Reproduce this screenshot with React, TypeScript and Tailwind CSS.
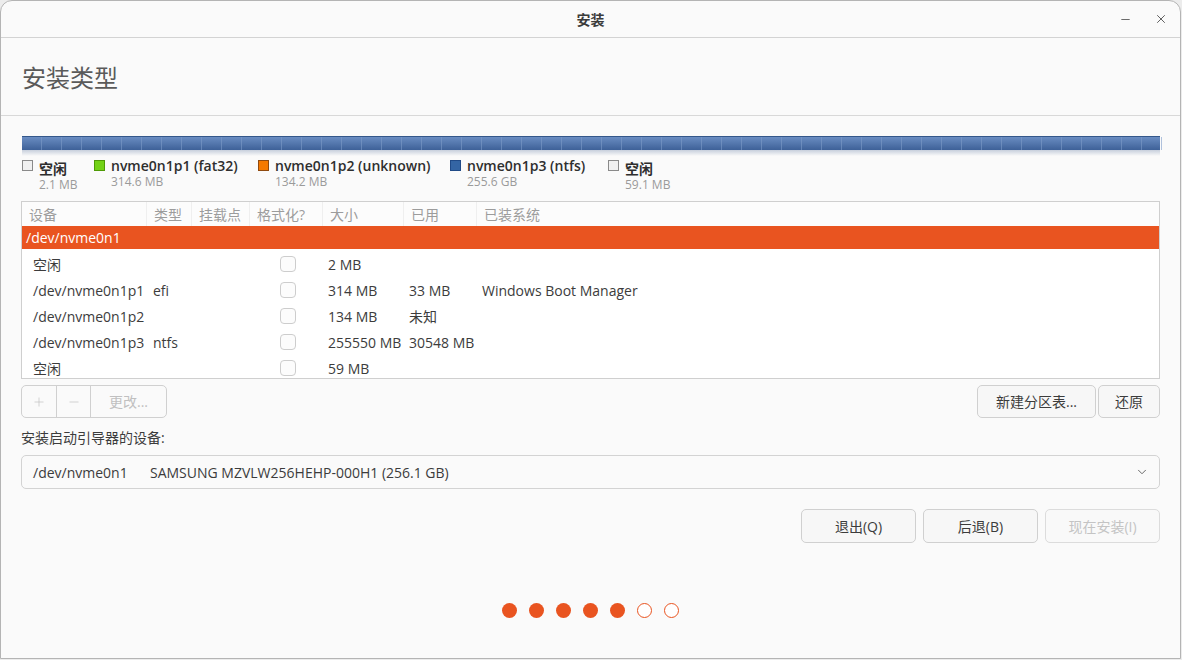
import { ChevronDown, Minus, Plus, X } from "lucide-react";

const font = "font-['Open_Sans','Noto_Sans_CJK_SC',sans-serif]";

const legend = [
  { name: "空闲", size: "2.1 MB", color: "bg-[#f0f0f0] border-[#8a8a8a]" },
  { name: "nvme0n1p1 (fat32)", size: "314.6 MB", color: "bg-[#73d216] border-[#4e9a06]" },
  { name: "nvme0n1p2 (unknown)", size: "134.2 MB", color: "bg-[#f57900] border-[#8f4a10]" },
  { name: "nvme0n1p3 (ntfs)", size: "255.6 GB", color: "bg-[#3465a4] border-[#204a87]" },
  { name: "空闲", size: "59.1 MB", color: "bg-[#f0f0f0] border-[#8a8a8a]" },
];

const legendGaps = ["w-[72px]", "w-[164px]", "w-[192px]", "w-[158px]", ""];

const rows = [
  { dev: "空闲", type: "", size: "2 MB", used: "", sys: "" },
  { dev: "/dev/nvme0n1p1", type: "efi", size: "314 MB", used: "33 MB", sys: "Windows Boot Manager" },
  { dev: "/dev/nvme0n1p2", type: "", size: "134 MB", used: "未知", sys: "" },
  { dev: "/dev/nvme0n1p3", type: "ntfs", size: "255550 MB", used: "30548 MB", sys: "" },
  { dev: "空闲", type: "", size: "59 MB", used: "", sys: "" },
];

const headers = [
  { label: "设备", w: "w-[125px]" },
  { label: "类型", w: "w-[45px]" },
  { label: "挂载点", w: "w-[58px]" },
  { label: "格式化?", w: "w-[73px]" },
  { label: "大小", w: "w-[81px]" },
  { label: "已用", w: "w-[73px]" },
  { label: "已装系统", w: "flex-1" },
];

function Dot({ filled }: { filled: boolean }) {
  return (
    <div
      className={
        filled
          ? "w-[15px] h-[15px] rounded-full bg-[#e95420]"
          : "w-[15px] h-[15px] rounded-full border border-[#e95420] bg-white"
      }
    />
  );
}

export default function App() {
  return (
    <div className={`${font} w-[1182px] h-[660px] bg-[#ececec]`}>
      <div className="w-[1181px] h-[659px] bg-[#fafafa] border border-[#b4b4b4] rounded-t-[12px] flex flex-col overflow-hidden">
        {/* title bar */}
        <div className="h-[37px] shrink-0 border-b border-[#d3d3d3] flex items-center relative">
          <div className="flex-1 text-center text-[14px] font-bold text-[#3b3b3b]">安装</div>
          <div className="absolute right-[12px] top-0 h-full flex items-center gap-[22px] text-[#4a4a4a]">
            <Minus size={13} strokeWidth={1.5} />
            <X size={14} strokeWidth={1.5} />
          </div>
        </div>

        {/* heading */}
        <div className="h-[78px] shrink-0 border-b border-[#d8d8d8] flex items-center pl-[21px] pt-[2px]">
          <h1 className="text-[24px] text-[#5a5a5a] leading-none">安装类型</h1>
        </div>

        <div className="flex flex-col px-[20px] text-[14px] text-[#3c3c3c]">
          {/* partition bar */}
          <div className="mt-[20px] ml-[1px] h-[14px] flex border-t border-[#34578a] bg-gradient-to-b from-[#6a8dc2] to-[#3e6198]">
            <div className="w-[2px] bg-[#f57900]" />
            {Array.from({ length: 57 }).map((_, i) => (
              <div key={i} className="w-[20px] shrink-0 border-r border-[#7d9bc8]/60" />
            ))}
          </div>
          <div className="ml-[1px] h-[6px] bg-gradient-to-b from-[#c7cfdc] to-[#fafafa]" />

          {/* legend */}
          <div className="flex mt-[1px] h-[38px] ml-[1px]">
            {legend.map((l, i) => (
              <div key={i} className={`flex ${legendGaps[i]}`}>
                <div className={`w-[11px] h-[11px] border mt-[3px] ${l.color}`} />
                <div className="ml-[6px] flex flex-col">
                  <span className={`text-[14px] font-semibold text-[#2e2e2e] leading-[17px] ${l.name === "空闲" ? "mt-[3px]" : ""}`}>{l.name}</span>
                  <span className="text-[12px] text-[#9a9a9a] leading-[16px]">{l.size}</span>
                </div>
              </div>
            ))}
          </div>

          {/* table */}
          <div className="mt-[6px] h-[178px] border border-[#cfcfcf] bg-white overflow-hidden">
            <div className="h-[24px] flex items-center text-[#9c9c9c] bg-[#fcfcfc]">
              {headers.map((h, i) => (
                <div key={i} className={`${h.w} h-full flex items-center pl-[7px] ${i < headers.length - 1 ? "border-r border-[#efefef]" : ""}`}>
                  {h.label}
                </div>
              ))}
            </div>
            <div className="h-[23px] bg-[#e95420] text-white flex items-center pl-[4px]">/dev/nvme0n1</div>
            <div className="pt-[2px]">
              {rows.map((r, i) => (
                <div key={i} className="h-[26px] flex items-center whitespace-nowrap">
                  <div className="w-[131px] pl-[11px]">{r.dev}</div>
                  <div className="w-[127px]">{r.type}</div>
                  <div className="w-[48px] flex">
                    <div className="w-[16px] h-[16px] rounded-[4px] border border-[#cdcdcd] bg-[#fcfcfc]" />
                  </div>
                  <div className="w-[81px]">{r.size}</div>
                  <div className="w-[73px]">{r.used}</div>
                  <div className="flex-1">{r.sys}</div>
                </div>
              ))}
            </div>
          </div>

          {/* partition buttons */}
          <div className="mt-[6px] flex justify-between">
            <div className="flex h-[33px] border border-[#d0d0d0] rounded-[5px] text-[#c0c0c0]">
              <div className="w-[35px] flex items-center justify-center border-r border-[#d0d0d0]">
                <Plus size={14} strokeWidth={1.2} />
              </div>
              <div className="w-[34px] flex items-center justify-center border-r border-[#d0d0d0]">
                <Minus size={14} strokeWidth={1.2} />
              </div>
              <div className="w-[75px] flex items-center justify-center">更改...</div>
            </div>
            <div className="flex gap-[2px]">
              <button className="w-[119px] h-[33px] border border-[#d0d0d0] rounded-[5px] bg-[#f7f7f7]">新建分区表...</button>
              <button className="w-[62px] h-[33px] border border-[#d0d0d0] rounded-[5px] bg-[#f7f7f7]">还原</button>
            </div>
          </div>

          <div className="mt-[9px] h-[20px] flex items-center">安装启动引导器的设备:</div>

          <div className="mt-[8px] h-[34px] border border-[#d3d3d3] rounded-[5px] flex items-center pl-[11px] pr-[10px]">
            <span className="w-[117px]">/dev/nvme0n1</span>
            <span className="flex-1">SAMSUNG MZVLW256HEHP-000H1 (256.1 GB)</span>
            <ChevronDown size={14} strokeWidth={1.5} className="text-[#555]" />
          </div>

          <div className="mt-[20px] flex justify-end gap-[7px]">
            <button className="w-[115px] h-[34px] border border-[#d0d0d0] rounded-[5px] bg-[#f7f7f7]">退出(Q)</button>
            <button className="w-[115px] h-[34px] border border-[#d0d0d0] rounded-[5px] bg-[#f7f7f7]">后退(B)</button>
            <button className="w-[115px] h-[34px] border border-[#dcdcdc] rounded-[5px] bg-[#f9f9f9] text-[#c4c4c4]">现在安装(I)</button>
          </div>

          <div className="mt-[60px] flex justify-center gap-[12px]">
            {[true, true, true, true, true, false, false].map((f, i) => (
              <Dot key={i} filled={f} />
            ))}
          </div>
        </div>
      </div>
    </div>
  );
}
